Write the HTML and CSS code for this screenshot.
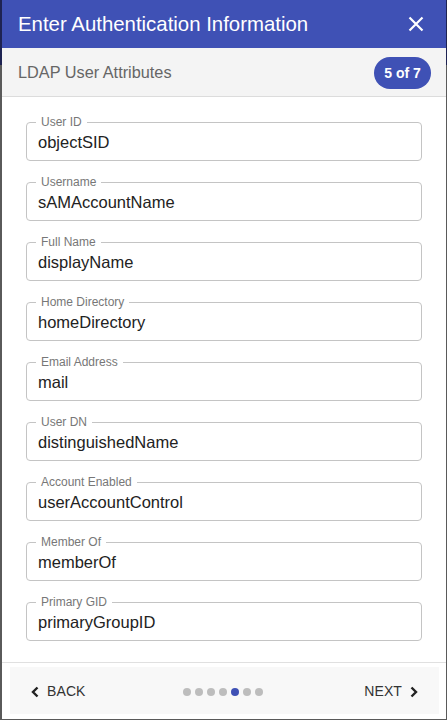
FILE: index.html
```html
<!DOCTYPE html>
<html>
<head>
<meta charset="utf-8">
<link rel="stylesheet" href="styles.css">
</head>
<body>
<div class="backdrop">
  <div class="dialog">
    <header class="dlg-header">
      <h1 class="dlg-title">Enter Authentication Information</h1>
      <button class="close-btn" aria-label="Close">
        <svg width="16" height="16" viewBox="0 0 16 16"><path d="M1.5 1.5 L14.5 14.5 M14.5 1.5 L1.5 14.5" stroke="#fff" stroke-width="2.2" fill="none"/></svg>
      </button>
    </header>
    <div class="subheader">
      <span class="sub-title">LDAP User Attributes</span>
      <span class="badge">5 of 7</span>
    </div>
    <div class="content">
      <div class="field"><span class="label">User ID</span><div class="value">objectSID</div></div>
      <div class="field"><span class="label">Username</span><div class="value">sAMAccountName</div></div>
      <div class="field"><span class="label">Full Name</span><div class="value">displayName</div></div>
      <div class="field"><span class="label">Home Directory</span><div class="value">homeDirectory</div></div>
      <div class="field"><span class="label">Email Address</span><div class="value">mail</div></div>
      <div class="field"><span class="label">User DN</span><div class="value">distinguishedName</div></div>
      <div class="field"><span class="label">Account Enabled</span><div class="value">userAccountControl</div></div>
      <div class="field"><span class="label">Member Of</span><div class="value">memberOf</div></div>
      <div class="field"><span class="label">Primary GID</span><div class="value">primaryGroupID</div></div>
    </div>
    <footer class="dlg-footer">
      <div class="stepper">
        <button class="nav-btn back">
          <svg width="10" height="12" viewBox="0 0 10 12"><path d="M7.5 1.5 L3 6 L7.5 10.5" stroke="#222" stroke-width="2.4" fill="none"/></svg>
          <span>BACK</span>
        </button>
        <div class="dots">
          <span class="dot"></span><span class="dot"></span><span class="dot"></span><span class="dot"></span><span class="dot active"></span><span class="dot"></span><span class="dot"></span>
        </div>
        <button class="nav-btn next">
          <span>NEXT</span>
          <svg width="10" height="12" viewBox="0 0 10 12"><path d="M2.5 1.5 L7 6 L2.5 10.5" stroke="#222" stroke-width="2.4" fill="none"/></svg>
        </button>
      </div>
    </footer>
  </div>
</div>
</body>
</html>
```
FILE: styles.css
```css
* { box-sizing: border-box; }
html, body {
  margin: 0;
  padding: 0;
  height: 720px;
  overflow: hidden;
}
body {
  font-family: "Liberation Sans", Arial, sans-serif;
  background: linear-gradient(to bottom, #1e2352 0, #1e2352 65px, #5a5a5a 65px, #5a5a5a 100%);
}
.backdrop {
  padding: 0 1px 0 2px;
  height: 720px;
}
.dialog {
  width: 444px;
  height: 719px;
  background: #fff;
  display: flex;
  flex-direction: column;
}
.dlg-header {
  height: 48px;
  background: #3f51b5;
  display: flex;
  align-items: center;
  justify-content: space-between;
  padding: 0 22px 0 16px;
  flex: none;
}
.dlg-title {
  margin: 0;
  color: #fff;
  font-size: 20.4px;
  font-weight: 400;
}
.close-btn {
  background: none;
  border: 0;
  padding: 0;
  width: 16px;
  height: 16px;
  display: flex;
}
.subheader {
  height: 49px;
  background: #f4f4f4;
  border-bottom: 1px solid #dcdcdc;
  display: flex;
  align-items: center;
  justify-content: space-between;
  padding: 0 15px 0 16px;
  flex: none;
}
.sub-title {
  color: #666;
  font-size: 16.3px;
  margin-top: 1px;
}
.badge {
  background: #3f51b5;
  color: #fff;
  font-weight: 700;
  font-size: 14px;
  height: 32px;
  width: 57px;
  border-radius: 16px;
  display: flex;
  align-items: center;
  justify-content: center;
  margin-top: 1px;
}
.content {
  flex: 1;
  padding: 25px 24px 0 24px;
  display: flex;
  flex-direction: column;
  gap: 21px;
}
.field {
  border: 1px solid #c4c4c4;
  border-radius: 4px;
  height: 39px;
  padding: 0 8px 0 11px;
  position: relative;
  display: flex;
  align-items: center;
}
.field .label {
  position: absolute;
  left: 9px;
  top: -7px;
  font-size: 12px;
  line-height: 12px;
  color: #777;
  background: #fff;
  padding: 0 5px;
}
.field .value {
  font-size: 16.5px;
  color: #222;
  line-height: 20px;
  margin-top: 1px;
}
.dlg-footer {
  height: 57px;
  border-top: 1px solid #e0e0e0;
  padding: 4px 7px 4px 8px;
  flex: none;
}
.stepper {
  height: 47px;
  background: #f8f8f8;
  display: flex;
  align-items: center;
  justify-content: space-between;
  padding: 0 20px 0 20px;
}
.nav-btn {
  background: none;
  border: 0;
  padding: 0;
  display: flex;
  align-items: center;
  gap: 7px;
  font-family: "Liberation Sans", Arial, sans-serif;
  font-size: 14px;
  color: #333;
  letter-spacing: 0.1px;
}
.nav-btn svg { margin-top: 2px; }
.dots {
  display: flex;
  gap: 4px;
  margin-left: -4px;
  margin-top: 3px;
}
.dot {
  width: 8px;
  height: 8px;
  border-radius: 50%;
  background: #bdbdbd;
}
.dot.active { background: #3f51b5; }
```
